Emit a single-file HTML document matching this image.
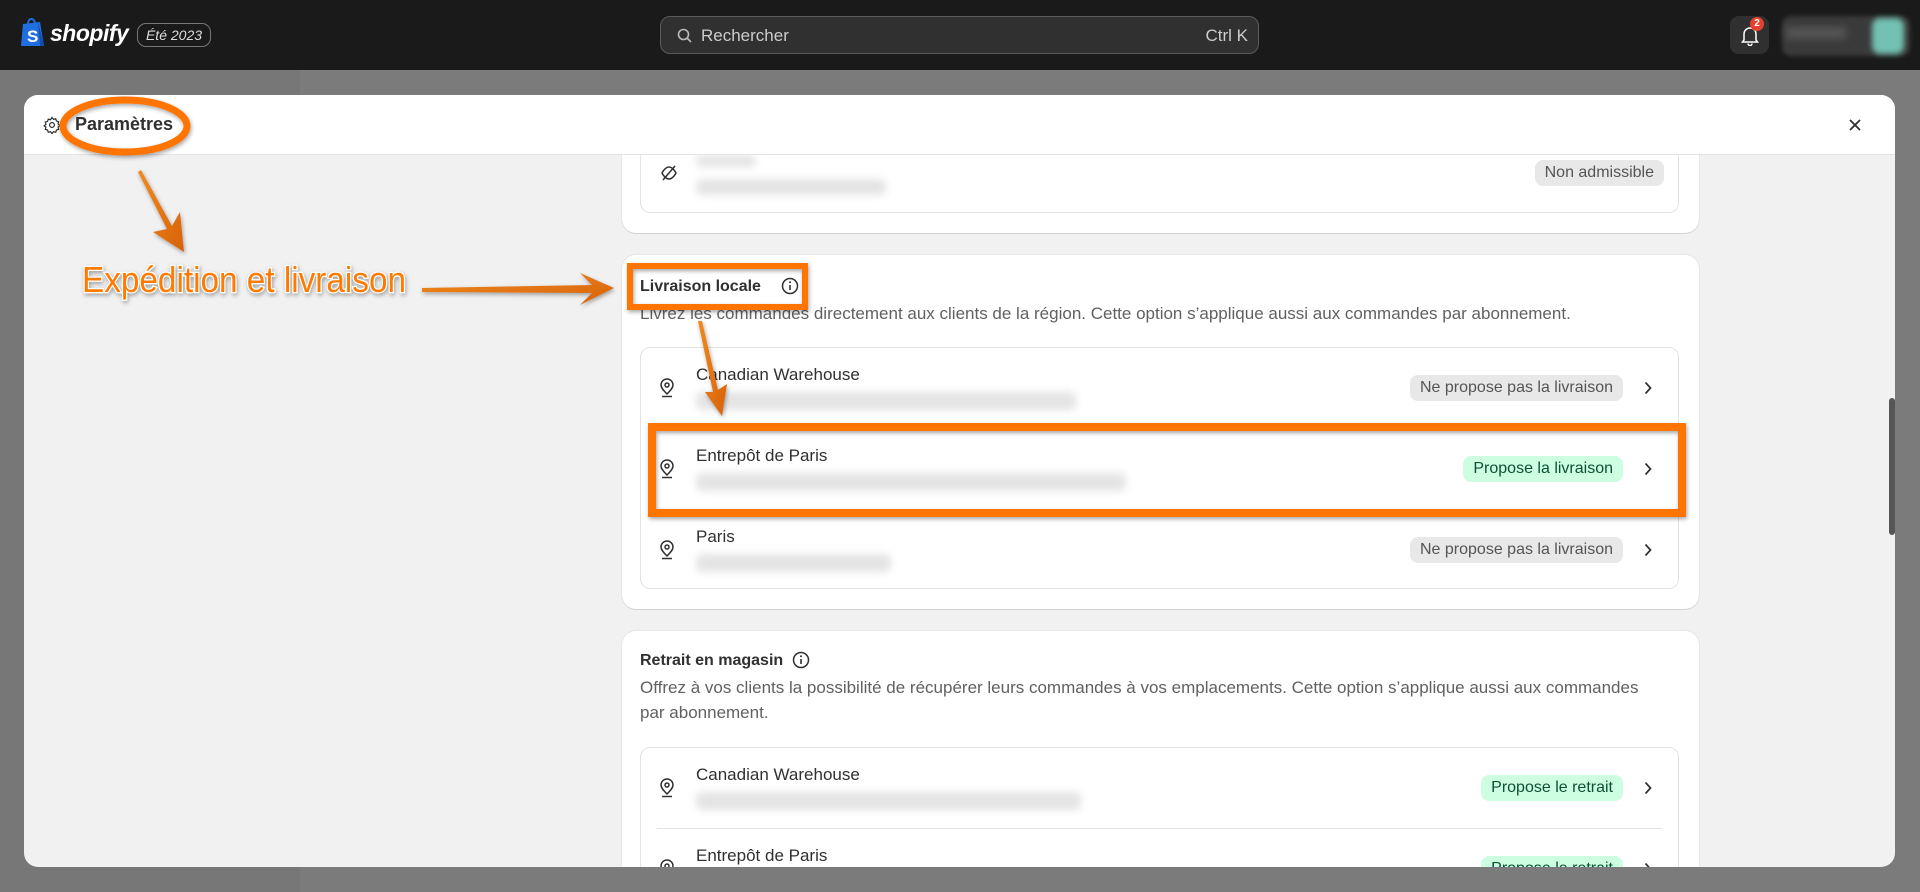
<!DOCTYPE html>
<html><head><meta charset="utf-8"><style>
*{box-sizing:border-box;margin:0;padding:0}
html,body{width:1920px;height:892px;overflow:hidden}
body{background:#7b7b7b;font-family:"Liberation Sans",sans-serif;position:relative}
.top{position:absolute;left:0;top:0;width:1920px;height:70px;background:#1a1a1a}
.side{position:absolute;left:0;top:70px;width:300px;height:822px;background:#777}
.modal{position:absolute;left:24px;top:95px;width:1871px;height:772px;background:#f1f1f1;border-radius:14px;overflow:hidden;z-index:1}
.mh{position:absolute;left:0;top:0;width:100%;height:60px;background:#fff;border-bottom:1px solid #e3e3e3;z-index:5}
.body{position:absolute;left:0;top:60px;width:100%;height:712px;overflow:hidden}
.card{position:absolute;left:598px;width:1077px;background:#fff;border-radius:14px;box-shadow:0 1px 0 #d4d4d4,0 0 0 1px #e6e6e6}
.list{position:absolute;left:18px;width:1039px;border:1px solid #e3e3e3;border-radius:10px;background:#fff}
.row{position:absolute;left:0;width:100%;height:81px}
.name{position:absolute;left:55px;top:17px;font-size:17px;color:#303030}
.addr{position:absolute;left:55px;top:44px;height:18px;border-radius:6px;background:#e4e4e4;filter:blur(4px)}
.pin{position:absolute;left:18px;top:30px}
.badge{position:absolute;right:55px;top:27px;height:26px;line-height:26px;padding:0 10px;border-radius:8px;font-size:16px}
.gray{background:#e8e8e8;color:#555}
.green{background:#cdfee1;color:#0c5132}
.chev{position:absolute;right:26px;top:33px}
.ttl{position:absolute;left:18px;font-size:16px;font-weight:bold;color:#303030}
.desc{position:absolute;left:18px;font-size:17px;color:#616161;line-height:25px;width:1040px}
.div{position:absolute;left:16px;right:16px;height:1px;background:#e3e3e3}
</style></head><body>
<div class="top">
 <svg style="position:absolute;left:20px;top:16px" width="26" height="32" viewBox="0 0 26 32"><path d="M3 8 L20 6 L24 30 L1 30 Z" fill="#1f6fe0"/><path d="M18 6 L24 30 L20 30 Z" fill="#0f4fb0"/><path d="M8 8 C8 2 14 1 15 7" stroke="#1f6fe0" stroke-width="2" fill="none"/><text x="7" y="26" font-family="Liberation Sans" font-weight="bold" font-size="17" fill="#fff">S</text></svg>
 <div style="position:absolute;left:50px;top:20px;color:#fff;font-weight:bold;font-style:italic;font-size:23px;letter-spacing:-0.5px">shopify</div>
 <div style="position:absolute;left:137px;top:23px;width:74px;height:24px;border:1px solid #777;border-radius:9px;color:#ddd;font-style:italic;font-size:14px;line-height:22px;text-align:center">Été 2023</div>
 <div style="position:absolute;left:660px;top:16px;width:599px;height:38px;background:#303030;border:1px solid #5a5a5a;border-radius:10px">
  <svg style="position:absolute;left:16px;top:11px" width="16" height="16" viewBox="0 0 16 16"><circle cx="6.5" cy="6.5" r="5" stroke="#bbb" stroke-width="1.6" fill="none"/><path d="M10.5 10.5 L14 14" stroke="#bbb" stroke-width="1.6"/></svg>
  <span style="position:absolute;left:40px;top:9px;color:#ccc;font-size:17px">Rechercher</span>
  <span style="position:absolute;right:10px;top:9px;color:#ccc;font-size:17px">Ctrl K</span>
 </div>
 <div style="position:absolute;left:1730px;top:16px;width:39px;height:38px;background:#303030;border-radius:9px">
  <svg style="position:absolute;left:11px;top:10px" width="18" height="20" viewBox="0 0 18 20"><path d="M3 14 V8 a6 6 0 0 1 12 0 V14 L16.5 16 H1.5 Z" stroke="#fff" stroke-width="1.5" fill="none"/><path d="M7 17.5 a2 2 0 0 0 4 0" stroke="#fff" stroke-width="1.5" fill="none"/></svg>
  <div style="position:absolute;left:20px;top:1px;width:14px;height:14px;border-radius:7px;background:#e5412f;color:#fff;font-size:10px;font-weight:bold;text-align:center;line-height:14px">2</div>
 </div>
 <div style="position:absolute;left:1782px;top:16px;width:128px;height:40px;background:#3a3a3a;border-radius:9px;filter:blur(2px)"></div>
 <div style="position:absolute;left:1786px;top:27px;width:60px;height:12px;background:#555;filter:blur(4px)"></div>
 <div style="position:absolute;left:1872px;top:18px;width:32px;height:36px;background:#73c1b2;border-radius:8px;filter:blur(3px)"></div>
</div>
<div class="side"></div>
<div class="modal">
 <div class="mh">
  <svg style="position:absolute;left:19px;top:21px" width="18" height="18" viewBox="0 0 24 24"><path d="M12 2 l2 2.5 3-.8 .9 3 3 .9 -.8 3 2.4 2.1 -2.4 2.1 .8 3 -3 .9 -.9 3 -3-.8 -2 2.5 -2-2.5 -3 .8 -.9-3 -3-.9 .8-3 L1.5 13.2 3.9 11.1 3.1 8.1 6.1 7.2 7 4.2 10 5Z" stroke="#303030" stroke-width="1.6" fill="none"/><circle cx="12" cy="12" r="3.2" stroke="#303030" stroke-width="1.6" fill="none"/></svg>
  <div style="position:absolute;left:51px;top:19px;font-size:18px;font-weight:bold;color:#303030">Paramètres</div>
  <svg style="position:absolute;left:1825px;top:24px" width="12" height="12" viewBox="0 0 12 12"><path d="M1 1 L11 11 M11 1 L1 11" stroke="#303030" stroke-width="1.8"/></svg>
 </div>
 <div class="body">
 <!-- card 1 -->
 <div class="card" style="top:-40px;height:118px">
  <div class="list" style="top:0;height:98px;border-top:none;border-radius:0 0 10px 10px">
   <svg style="position:absolute;left:19px;top:49px" width="18" height="18" viewBox="0 0 18 18"><path d="M9 3 C5 3 2 9 2 9 s3 6 7 6 7-6 7-6 -3-6-7-6z" stroke="#303030" stroke-width="1.5" fill="none"/><path d="M3 16 L15 2" stroke="#303030" stroke-width="1.5"/></svg>
   <div class="addr" style="left:55px;top:40px;width:60px;height:12px"></div>
   <div class="addr" style="left:55px;top:64px;width:190px;height:16px"></div>
   <div class="badge gray" style="top:45px;right:14px">Non admissible</div>
  </div>
 </div>
 <!-- card 2 -->
 <div class="card" style="top:100px;height:354px">
  <div class="ttl" style="top:23px">Livraison locale</div>
  <svg style="position:absolute;left:159px;top:22px" width="18" height="18" viewBox="0 0 18 18"><circle cx="9" cy="9" r="7.5" stroke="#303030" stroke-width="1.5" fill="none"/><path d="M9 8 V13" stroke="#303030" stroke-width="1.6"/><circle cx="9" cy="5.3" r="1" fill="#303030"/></svg>
  <div class="desc" style="top:46px">Livrez les commandes directement aux clients de la région. Cette option s’applique aussi aux commandes par abonnement.</div>
  <div class="list" style="top:92px;height:242px">
   <div class="row" style="top:0"><svg class="pin" width="16" height="20" viewBox="0 0 16 20"><path d="M8 16 C3 11 2 9 2 7 a6 6 0 0 1 12 0 c0 2 -1 4 -6 9z" stroke="#303030" stroke-width="1.5" fill="none"/><circle cx="8" cy="7" r="2" stroke="#303030" stroke-width="1.5" fill="none"/><path d="M3 18.5 H13" stroke="#303030" stroke-width="1.5"/></svg><div class="name">Canadian Warehouse</div><div class="addr" style="width:380px"></div><div class="badge gray">Ne propose pas la livraison</div><svg class="chev" width="8" height="14" viewBox="0 0 8 14"><path d="M1.5 1.5 L6.5 7 L1.5 12.5" stroke="#303030" stroke-width="1.7" fill="none"/></svg></div>
   <div class="div" style="top:80px"></div>
   <div class="row" style="top:81px"><svg class="pin" width="16" height="20" viewBox="0 0 16 20"><path d="M8 16 C3 11 2 9 2 7 a6 6 0 0 1 12 0 c0 2 -1 4 -6 9z" stroke="#303030" stroke-width="1.5" fill="none"/><circle cx="8" cy="7" r="2" stroke="#303030" stroke-width="1.5" fill="none"/><path d="M3 18.5 H13" stroke="#303030" stroke-width="1.5"/></svg><div class="name">Entrepôt de Paris</div><div class="addr" style="width:430px"></div><div class="badge green">Propose la livraison</div><svg class="chev" width="8" height="14" viewBox="0 0 8 14"><path d="M1.5 1.5 L6.5 7 L1.5 12.5" stroke="#303030" stroke-width="1.7" fill="none"/></svg></div>
   <div class="div" style="top:161px"></div>
   <div class="row" style="top:162px"><svg class="pin" width="16" height="20" viewBox="0 0 16 20"><path d="M8 16 C3 11 2 9 2 7 a6 6 0 0 1 12 0 c0 2 -1 4 -6 9z" stroke="#303030" stroke-width="1.5" fill="none"/><circle cx="8" cy="7" r="2" stroke="#303030" stroke-width="1.5" fill="none"/><path d="M3 18.5 H13" stroke="#303030" stroke-width="1.5"/></svg><div class="name">Paris</div><div class="addr" style="width:195px"></div><div class="badge gray">Ne propose pas la livraison</div><svg class="chev" width="8" height="14" viewBox="0 0 8 14"><path d="M1.5 1.5 L6.5 7 L1.5 12.5" stroke="#303030" stroke-width="1.7" fill="none"/></svg></div>
  </div>
 </div>
 <!-- card 3 -->
 <div class="card" style="top:476px;height:300px">
  <div class="ttl" style="top:21px">Retrait en magasin</div>
  <svg style="position:absolute;left:170px;top:20px" width="18" height="18" viewBox="0 0 18 18"><circle cx="9" cy="9" r="7.5" stroke="#303030" stroke-width="1.5" fill="none"/><path d="M9 8 V13" stroke="#303030" stroke-width="1.6"/><circle cx="9" cy="5.3" r="1" fill="#303030"/></svg>
  <div class="desc" style="top:44px;width:1005px">Offrez à vos clients la possibilité de récupérer leurs commandes à vos emplacements. Cette option s’applique aussi aux commandes par abonnement.</div>
  <div class="list" style="top:116px;height:200px">
   <div class="row" style="top:0"><svg class="pin" width="16" height="20" viewBox="0 0 16 20"><path d="M8 16 C3 11 2 9 2 7 a6 6 0 0 1 12 0 c0 2 -1 4 -6 9z" stroke="#303030" stroke-width="1.5" fill="none"/><circle cx="8" cy="7" r="2" stroke="#303030" stroke-width="1.5" fill="none"/><path d="M3 18.5 H13" stroke="#303030" stroke-width="1.5"/></svg><div class="name">Canadian Warehouse</div><div class="addr" style="width:385px"></div><div class="badge green">Propose le retrait</div><svg class="chev" width="8" height="14" viewBox="0 0 8 14"><path d="M1.5 1.5 L6.5 7 L1.5 12.5" stroke="#303030" stroke-width="1.7" fill="none"/></svg></div>
   <div class="div" style="top:80px"></div>
   <div class="row" style="top:81px"><svg class="pin" width="16" height="20" viewBox="0 0 16 20"><path d="M8 16 C3 11 2 9 2 7 a6 6 0 0 1 12 0 c0 2 -1 4 -6 9z" stroke="#303030" stroke-width="1.5" fill="none"/><circle cx="8" cy="7" r="2" stroke="#303030" stroke-width="1.5" fill="none"/><path d="M3 18.5 H13" stroke="#303030" stroke-width="1.5"/></svg><div class="name">Entrepôt de Paris</div><div class="badge green">Propose le retrait</div><svg class="chev" width="8" height="14" viewBox="0 0 8 14"><path d="M1.5 1.5 L6.5 7 L1.5 12.5" stroke="#303030" stroke-width="1.7" fill="none"/></svg></div>
  </div>
 </div>
 </div>
 <div style="position:absolute;left:1865px;top:303px;width:6px;height:137px;background:#555;border-radius:3px;z-index:6"></div>
</div>
<svg style="position:absolute;left:0;top:0;z-index:20" width="1920" height="892">
 <defs><filter id="sh" x="-20%" y="-20%" width="140%" height="140%"><feDropShadow dx="1" dy="2" stdDeviation="2" flood-opacity="0.35"/></filter>
 <linearGradient id="og" x1="0" y1="0" x2="1" y2="1"><stop offset="0" stop-color="#f08a20"/><stop offset="1" stop-color="#d8620a"/></linearGradient></defs>
 <ellipse cx="125" cy="126" rx="62" ry="26" fill="none" stroke="#ff7400" stroke-width="7" filter="url(#sh)"/>
 <rect x="630" y="266" width="175" height="41" fill="none" stroke="#ff7400" stroke-width="6" filter="url(#sh)"/>
 <rect x="652" y="427" width="1030" height="86" fill="none" stroke="#ff7400" stroke-width="8" filter="url(#sh)"/>
 <g fill="url(#og)" filter="url(#sh)">
  <path d="M138 172 L141 170 L172 226 L180 212 L184 252 L153 232 L167 229 Z"/>
  <path d="M422 288 L422 292 L592 293 L580 305 L614 288 L580 273 L592 285 Z"/>
  <path d="M698 321 L702 321 L718 390 L727 384 L722 416 L705 392 L713 392 Z"/>
 </g>
 <text x="82" y="292" font-family="Liberation Sans Narrow, Liberation Sans, sans-serif" font-size="36" fill="#ff7a00" stroke="#fff" stroke-width="2.5" paint-order="stroke" textLength="324" lengthAdjust="spacingAndGlyphs" filter="url(#sh)">Expédition et livraison</text>
</svg>
</body></html>
